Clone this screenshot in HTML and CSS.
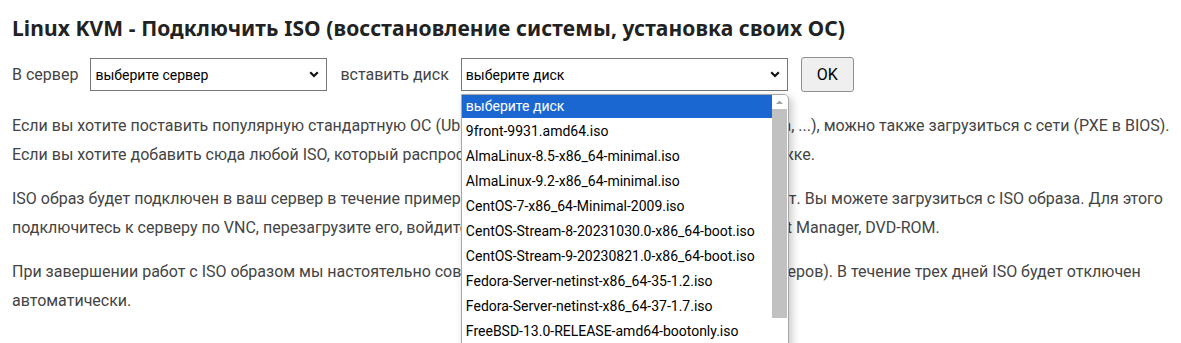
FILE: index.html
```html
<!DOCTYPE html>
<html lang="ru">
<head>
<meta charset="utf-8">
<title>Linux KVM - Подключить ISO</title>
<link rel="stylesheet" href="styles.css">
</head>
<body>
<div class="page">
  <h1 class="title">Linux KVM - Подключить ISO (восстановление системы, установка своих ОС)</h1>
  <form class="form-row">
    <label class="label">В сервер</label>
    <div class="select server-select">
      <span class="select-text">выберите сервер</span>
      <svg class="chevron" width="10" height="7" viewBox="0 0 10 7"><path d="M1.2 1.3 L5 5 L8.8 1.3" fill="none" stroke="#111" stroke-width="2.2"/></svg>
    </div>
    <label class="label">вставить диск</label>
    <div class="select disk-select">
      <span class="select-text">выберите диск</span>
      <svg class="chevron" width="10" height="7" viewBox="0 0 10 7"><path d="M1.2 1.3 L5 5 L8.8 1.3" fill="none" stroke="#111" stroke-width="2.2"/></svg>
      <div class="popup">
        <ul class="options">
          <li class="option selected">выберите диск</li>
          <li class="option">9front-9931.amd64.iso</li>
          <li class="option">AlmaLinux-8.5-x86_64-minimal.iso</li>
          <li class="option">AlmaLinux-9.2-x86_64-minimal.iso</li>
          <li class="option">CentOS-7-x86_64-Minimal-2009.iso</li>
          <li class="option">CentOS-Stream-8-20231030.0-x86_64-boot.iso</li>
          <li class="option">CentOS-Stream-9-20230821.0-x86_64-boot.iso</li>
          <li class="option">Fedora-Server-netinst-x86_64-35-1.2.iso</li>
          <li class="option">Fedora-Server-netinst-x86_64-37-1.7.iso</li>
          <li class="option">FreeBSD-13.0-RELEASE-amd64-bootonly.iso</li>
          <li class="option">FreeBSD-13.2-RELEASE-amd64-bootonly.iso</li>
        </ul>
        <div class="scrollbar">
          <svg class="scroll-arrow" width="15" height="14" viewBox="0 0 15 14"><path d="M4 9 L7.5 5.5 L11 9 Z" fill="#a3a3a3"/></svg>
          <div class="scroll-thumb"></div>
        </div>
      </div>
    </div>
    <button type="button" class="ok-btn">OK</button>
  </form>
  <p class="text">Если вы хотите поставить популярную стандартную ОС (Ubuntu, Debian, CentOS, FreeBSD, Gentoo, Fedora, ...), можно также загрузиться с сети (PXE в BIOS).<br>Если вы хотите добавить сюда любой ISO, который распространяется бесплатно, пишите в техподдержке.</p>
  <p class="text">ISO образ будет подключен в ваш сервер в течение примерно 5 минут, максимум в течение 10-ти минут. Вы можете загрузиться с ISO образа. Для этого<br>подключитесь к серверу по VNC, перезагрузите его, войдите в меню загрузки (F12, F8) и выберите Boot Manager, DVD-ROM.</p>
  <p class="text">При завершении работ с ISO образом мы настоятельно советуем отключить его от VPS (в списке серверов). В течение трех дней ISO будет отключен<br>автоматически.</p>
</div>
</body>
</html>
```
FILE: styles.css
```css
html {
  overflow: hidden;
  background: #ffffff;
}
body {
  margin: 0;
  padding: 0;
  min-height: 343px;
  background: #ffffff;
}
.page {
  padding: 14px 12px 0 12px;
  font-family: Roboto, "Liberation Sans", sans-serif;
  color: #444444;
}
.title {
  margin: 0;
  font-family: "Noto Sans", "Open Sans", sans-serif;
  font-weight: 700;
  font-size: 21px;
  letter-spacing: 0.1px;
  line-height: 28px;
  color: #222222;
  white-space: nowrap;
}
.form-row {
  margin: 15px 0 0 0;
  display: flex;
  align-items: center;
  height: 35px;
}
.label {
  font-size: 16px;
  color: #444444;
}
.select {
  position: relative;
  box-sizing: border-box;
  height: 33px;
  border: 1px solid #767676;
  background: #ffffff;
  display: flex;
  align-items: center;
  padding: 0 7px 0 4px;
  font-size: 14px;
  color: #000000;
}
.select-text {
  flex: 1;
}
.server-select {
  width: 237px;
  margin: 0 13px 0 12px;
}
.disk-select {
  width: 327px;
  margin: 0 13px 0 12px;
}
.chevron {
  display: block;
}
.ok-btn {
  box-sizing: border-box;
  width: 53px;
  height: 35px;
  border: 1px solid #8f8f8f;
  border-radius: 3px;
  background: #efefef;
  font-family: Roboto, "Liberation Sans", sans-serif;
  font-size: 16px;
  color: #000000;
  padding: 0;
}
.popup {
  position: absolute;
  left: -1px;
  top: 35px;
  width: 328px;
  height: 262px;
  box-sizing: border-box;
  border: 1px solid #a7a7a7;
  border-radius: 0 5px 0 0;
  background: #ffffff;
  box-shadow: 3px 3px 8px rgba(0, 0, 0, 0.22);
  display: flex;
  overflow: hidden;
  z-index: 10;
}
.options {
  list-style: none;
  margin: 0;
  padding: 0;
  flex: 1;
}
.option {
  height: 25px;
  line-height: 24px;
  padding-left: 4px;
  font-size: 14px;
  color: #000000;
  white-space: nowrap;
}
.option.selected {
  background: #1a67d2;
  color: #ffffff;
  height: 23px;
  line-height: 22px;
  margin-bottom: 1px;
}
.scrollbar {
  width: 15px;
  background: #ffffff;
  display: flex;
  flex-direction: column;
  margin-right: 1px;
}
.scroll-arrow {
  display: block;
}
.scroll-thumb {
  height: 209px;
  background: #c1c1c1;
}
.text {
  margin: 19px 0 0 0;
  font-size: 16px;
  line-height: 29px;
  color: #444444;
  white-space: nowrap;
}
.text + .text {
  margin-top: 15px;
}
```
